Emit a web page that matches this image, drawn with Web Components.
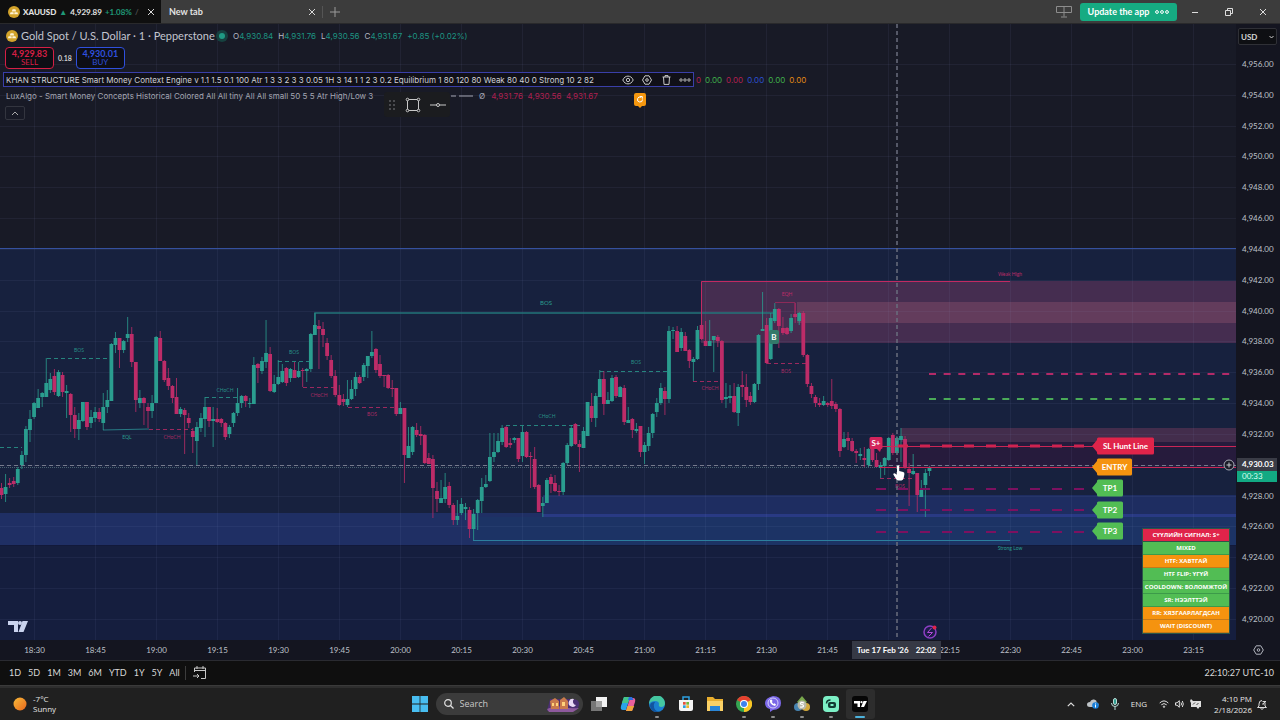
<!DOCTYPE html>
<html lang="en">
<head>
<meta charset="utf-8">
<title>XAUUSD</title>
<meta name="viewport" content="width=device-width, initial-scale=1">
<style>
  html, body { margin: 0; height: 100%; background: #131420; }
  body { font-family: Lato, "Open Sans", sans-serif; color: #c9cbd2; }
</style>
</head>
<body>
<trade-app>
  <tab-bar slot="tabs">
    <app-tab active>
      <gold-logo slot="icon"></gold-logo>
      <b>XAUUSD</b> <i class="up">▲</i> <span>4,929.89</span> <i class="up">+1.08%</i> <i class="dim">/</i>
    </app-tab>
    <app-tab><span>New tab</span></app-tab>
  </tab-bar>
  <price-chart slot="chart">
    <chart-legend slot="legend"></chart-legend>
    <signal-table slot="signals"></signal-table>
  </price-chart>
  <price-axis slot="price"></price-axis>
  <time-axis slot="time"></time-axis>
  <range-bar slot="range"></range-bar>
  <task-bar slot="tasks"></task-bar>
</trade-app>

<script>
// shared helper: opens the shadow root and fills it with styles and markup
class BaseElement extends HTMLElement {
  connectedCallback() {
    if (this.shadowRoot) return;
    this.attachShadow({ mode: 'open' });
    const template = document.createElement('template');
    template.innerHTML = `<style>
      :host, * { box-sizing: border-box; }
      button, select, input { font: inherit; color: inherit; background: none; border: 0; padding: 0; margin: 0; }
      button { display: inline-flex; align-items: center; justify-content: center; }
      svg { display: block; flex: none; }
      ul { list-style: none; margin: 0; padding: 0; }
      ${this.constructor.styles}
    </style>${this.render()}`;
    this.shadowRoot.replaceChildren(template.content);
  }
}

class TradeApp extends BaseElement {
  static styles = /* css */`
    :host {
      display: grid;
      min-height: 100vh;
      grid-template-columns: minmax(0, 1fr) 44px;
      grid-template-rows: 24px minmax(0, 1fr) 20px 26px 34px;
    }
    .wide { grid-column: 1 / -1; display: grid; }
    .cell { display: grid; min-height: 0; }
  `;

  render() {
    return /* html */`
      <header class="wide"><slot name="tabs"></slot></header>
      <main class="cell"><slot name="chart"></slot></main>
      <aside class="cell"><slot name="price"></slot></aside>
      <div class="wide"><slot name="time"></slot></div>
      <nav class="wide"><slot name="range"></slot></nav>
      <footer class="wide"><slot name="tasks"></slot></footer>
    `;
  }
}

class GoldLogo extends BaseElement {
  static styles = `:host { display: inline-block; width: 12px; height: 12px; flex: none; }`;

  render() {
    return `<svg width="12" height="12" viewBox="0 0 12 12"><circle cx="6" cy="6" r="6" fill="#d3a32b"/>
      <path d="M4.6 3.2h2.8l.8 2.2H3.8zM2.6 6.2h2.9l.3 2H1.9zM6.5 6.2h2.9l.7 2H6.2z" fill="#fff3d6"/></svg>`;
  }
}

class TabBar extends BaseElement {
  static styles = /* css */`
    :host { display: flex; align-items: stretch; background: #3c3c3c; border-bottom: 1px solid #29292b; font-size: 9px; }
    .plus { width: 24px; border-left: 1px solid #555; height: 12px; align-self: center; }
    .space { flex: 1; background: #3c3c3c; }
    .tools { display: flex; align-items: center; }
    .update {
      width: 97px; height: 18px; margin: 0 1px 0 8px; gap: 6px; border-radius: 3px;
      background: #16ab82; color: #fff; font-weight: 700; font-size: 9px;
    }
    .win { width: 34px; height: 22px; color: #ddd; }
  `;

  render() {
    return /* html */`
      <slot></slot>
      <button class="plus" aria-label="Open tab"><svg width="10" height="10" viewBox="0 0 10 10" stroke="#9a9a9a"><path d="M5 0v10M0 5h10"/></svg></button>
      <div class="space"></div>
      <div class="tools">
        <button aria-label="Displays"><svg width="16" height="12" viewBox="0 0 16 12" fill="none" stroke="#8d8d8d"><path d="M.5.5h15v6H.5zM8 .5v10M5 11h6"/></svg></button>
        <button class="update">Update the app
          <svg width="14" height="4" viewBox="0 0 14 4" fill="none" stroke="#fff"><circle cx="2" cy="2" r="1.4"/><circle cx="7" cy="2" r="1.4"/><circle cx="12" cy="2" r="1.4"/></svg></button>
        <button class="win" aria-label="Minimize"><svg width="8" height="8" viewBox="0 0 8 8" stroke="currentColor"><path d="M1 4.5h6"/></svg></button>
        <button class="win" aria-label="Restore"><svg width="8" height="8" viewBox="0 0 8 8" fill="none" stroke="currentColor"><path d="M.5 2.5h5v5h-5zM2.5 2V.5h5v5H6"/></svg></button>
        <button class="win" aria-label="Close"><svg width="8" height="8" viewBox="0 0 8 8" stroke="currentColor"><path d="M1 1l6 6M7 1L1 7"/></svg></button>
      </div>
    `;
  }
}

class AppTab extends BaseElement {
  static styles = /* css */`
    :host {
      display: flex; align-items: center; gap: 3px; width: 161px; padding: 0 4px 0 8px;
      color: #e3e3e3; font-weight: 700; font-size: 9px; line-height: 12px; white-space: nowrap;
    }
    :host([active]) { background: #0f0f0f; font-size: 8px; }
    ::slotted(*) { font-style: normal; }
    ::slotted(.up) { color: #1f9a78; }
    ::slotted(.dim) { color: #4b4b4b; }
    button { margin-left: auto; width: 12px; height: 12px; }
  `;

  render() {
    return /* html */`
      <slot name="icon"></slot><slot></slot>
      <button aria-label="Close tab"><svg width="6" height="6" viewBox="0 0 6 6" stroke="#d8d8d8"><path d="M0 0l6 6M6 0L0 6"/></svg></button>
    `;
  }
}

class ChartLegend extends BaseElement {
  static styles = /* css */`
    :host { display: flex; flex-direction: column; align-items: flex-start; font: 8px/12px Inter, sans-serif; white-space: nowrap; color: #b7b9c4; }
    .row { display: flex; align-items: center; }
    .title { height: 14px; padding-left: 6px; gap: 3px; margin-top: 5px; }
    h1 { margin: 0; font: 400 11px/14px Lato, sans-serif; color: #c3c5cf; width: 190px; }
    .dot { width: 6px; height: 6px; border-radius: 50%; background: #1f9a84; box-shadow: 0 0 0 3px #16413f; margin: 0 5px; }
    .ohlc { display: flex; gap: 5px; color: #1d9482; }
    .ohlc b { font-weight: 400; color: #b7b9c4; }
    .quote { gap: 4px; padding-left: 5px; margin-top: 4px; height: 22px; font-family: Lato, sans-serif; }
    .quote button {
      flex-direction: column; width: 49px; height: 22px; border: 1px solid; border-radius: 4px;
      background: #0d0e15; font-size: 8px; line-height: 9px;
    }
    .quote strong { font-size: 9px; }
    .sell { color: #d51f45; }
    .buy { color: #2f50dd; }
    .spread { font-size: 7px; font-weight: 700; color: #ccc; }
    .study { margin: 3px 0 0 3px; gap: 2px; height: 15px; }
    .box { display: flex; align-items: center; height: 15px; border: 1px solid #3a3fa8; background: #101018; padding: 0 2px; color: #d0d1d6; }
    .box p { width: 616px; }
    .icons { display: flex; gap: 7px; }
    .icons button { width: 12px; height: 12px; }
    p { margin: 0; }
    .values { display: flex; gap: 4px; }
    .red { color: #b02050; }
    .lux { padding-left: 6px; margin-top: 3px; height: 12px; gap: 6px; color: #a4a6b2; }
    .lux p { width: 439px; }
    .toggle { width: 20px; height: 14px; border: 1px solid #33353f; border-radius: 2px; margin: 4px 0 0 5px; }
    /* the drawing tools float above the legend */
    .tools {
      position: absolute; left: 384px; top: 68px; width: 66px; height: 25px; border-radius: 3px;
      background: #1b1c1f; display: flex; align-items: center; justify-content: space-between; padding: 0 4px 0 5px;
    }
  `;

  render() {
    const values = [['#b02050', '0'], ['#3fae4a', '0.00'], ['#b02050', '0.00'], ['#2b4fd0', '0.00'], ['#3fae4a', '0.00'], ['#e08a14', '0.00']];
    return /* html */`
      <div class="row title">
        <gold-logo></gold-logo>
        <h1>Gold Spot / U.S. Dollar · 1 · Pepperstone</h1>
        <i class="dot"></i>
        <div class="ohlc">
          <span><b>O</b>4,930.84</span><span><b>H</b>4,931.76</span><span><b>L</b>4,930.56</span><span><b>C</b>4,931.67</span><span>+0.85 (+0.02%)</span>
        </div>
      </div>
      <div class="row quote">
        <button class="sell"><strong>4,929.83</strong>SELL</button>
        <span class="spread">0.18</span>
        <button class="buy"><strong>4,930.01</strong>BUY</button>
      </div>
      <div class="row study">
        <div class="box">
          <p>KHAN STRUCTURE Smart Money Context Engine v 1.1 1.5 0.1 100 Atr 1 3 3 2 3 3 0.05 1H 3 14 1 1 2 3 0.2 Equilibrium 1 80 120 80 Weak 80 40 0 Strong 10 2 82</p>
          <div class="icons">
            <button aria-label="Hide"><svg width="12" height="10" viewBox="0 0 12 10" fill="none" stroke="#c8c8c8"><path d="M.8 5C3-.2 9-.2 11.2 5 9 10.2 3 10.2.8 5z"/><circle cx="6" cy="5" r="1.7"/></svg></button>
            <button aria-label="Settings"><svg width="10" height="10" viewBox="0 0 10 10" fill="none" stroke="#c8c8c8"><path d="M3 .8h4L9.5 5 7 9.2H3L.5 5z"/><circle cx="5" cy="5" r="1.3"/></svg></button>
            <button aria-label="Remove"><svg width="9" height="10" viewBox="0 0 9 10" fill="none" stroke="#c8c8c8"><path d="M.5 2h8M3 2V.6h3V2M1.5 2l.5 7.4h5L7.5 2"/></svg></button>
            <button aria-label="More"><svg width="12" height="4" viewBox="0 0 12 4" fill="none" stroke="#b8b8b8"><circle cx="2" cy="2" r="1.2"/><circle cx="6" cy="2" r="1.2"/><circle cx="10" cy="2" r="1.2"/></svg></button>
          </div>
        </div>
        <div class="values">${values.map(([color, text]) => `<span style="color:${color}">${text}</span>`).join('')}</div>
      </div>
      <div class="row lux">
        <p>LuxAlgo - Smart Money Concepts Historical Colored All All tiny All All small 50 5 5 Atr High/Low 3</p>
        <svg width="22" height="2" viewBox="0 0 22 2" stroke="#a4a6b2"><path d="M0 1h5M8 1h14"/></svg>
        <span>Ø</span><span class="red">4,931.76&nbsp; 4,930.56&nbsp; 4,931.67</span>
      </div>
      <button class="toggle" aria-label="Collapse legend"><svg width="8" height="5" viewBox="0 0 8 5" fill="none" stroke="#aaa"><path d="M1 4l3-3 3 3"/></svg></button>
      <div class="tools">
        <svg width="6" height="10" viewBox="0 0 6 10" fill="#4a4b4f"><path d="M0 0h2v2H0zM4 0h2v2H4zM0 4h2v2H0zM4 4h2v2H4zM0 8h2v2H0zM4 8h2v2H4z"/></svg>
        <button aria-label="Rectangle"><svg width="16" height="16" viewBox="0 0 16 16" fill="#1b1c1f" stroke="#c8c8c8"><path d="M2.5 2.5h11v11h-11z"/><circle cx="2.5" cy="2.5" r="1.3"/><circle cx="13.5" cy="2.5" r="1.3"/><circle cx="2.5" cy="13.5" r="1.3"/><circle cx="13.5" cy="13.5" r="1.3"/></svg></button>
        <button aria-label="Line"><svg width="16" height="6" viewBox="0 0 16 6" fill="#1b1c1f" stroke="#c8c8c8"><path d="M0 3h16"/><circle cx="8" cy="3" r="1.5"/></svg></button>
      </div>
    `;
  }
}

// one bar per minute: direction, high, body top, body bottom, low
const BARS = `
r483,488,495,499 g474,487,494,502 r478,483,485,488 r477,481,484,487 g467,469,483,485 g451,455,465,469 g426,429,455,462
g410,419,430,442 g402,403,417,419 g389,398,408,408 g392,393,397,407 g358,383,397,397 g373,379,390,393 r369,376,392,395
g370,372,396,397 r372,375,392,397 g385,391,393,418 r393,394,415,432 r407,415,429,438 g413,420,429,440 g402,402,421,422
r402,402,427,430 g410,417,423,428 g407,412,418,422 r408,412,419,422 g393,407,423,430 g390,400,407,413 g343,344,401,401
g332,338,345,353 r338,338,350,368 g340,341,350,353 g317,334,338,342 r327,334,362,367 r362,362,400,412 g390,398,403,408
r397,398,403,425 r403,407,411,428 g395,403,411,418 g336,337,403,403 r331,338,361,361 r360,361,380,382 r368,378,386,390
r385,386,398,403 r378,397,414,414 g407,409,414,417 r408,410,415,454 r413,418,423,428 r428,431,437,453 g422,427,441,465
g413,418,428,432 g397,407,419,437 r407,407,421,427 g407,419,421,447 r408,419,422,423 r418,419,423,427 r422,423,437,440
g425,427,434,438 g412,413,423,427 g388,403,413,416 g395,396,403,408 r395,396,401,407 g398,403,404,408 g357,365,404,404
r363,364,368,383 g357,361,371,374 g320,353,362,368 r347,354,391,392 g375,384,392,393 g360,377,384,385 g364,371,382,383
r367,368,383,386 g368,369,378,382 r362,370,378,378 g362,371,377,378 r368,370,371,387 g368,369,371,382 g333,334,369,372
g313,325,335,335 r320,326,329,369 r322,329,335,347 r338,343,356,360 r355,360,376,378 r370,376,395,397 r385,395,405,406
r394,399,402,406 g380,399,405,407 g380,389,399,400 g372,377,389,396 r375,377,383,384 g363,365,377,381 g356,356,366,378
g331,352,356,358 r348,349,370,373 r355,364,376,378 r375,375,376,387 r374,375,388,389 r380,388,389,397 r388,388,414,416
g402,408,414,414 r408,408,455,483 g427,446,458,458 g426,427,452,455 r423,430,435,437 r426,434,436,445 r434,435,463,464
r453,458,464,464 r455,459,488,518 r482,491,499,512 g480,498,503,503 g473,487,499,503 r482,486,505,508 r503,505,520,525
g500,516,520,525 g498,504,513,515 g503,507,509,520 r507,510,529,538 g509,514,529,540 g499,500,513,530 g478,487,501,513
g475,484,487,488 g433,457,481,482 g433,452,457,462 g433,441,452,453 g425,428,442,445 r426,427,447,448 r438,443,445,448
g437,438,440,443 r438,438,459,462 g426,432,456,462 r431,432,457,458 r452,456,457,488 r447,459,487,489 r484,485,512,512
g497,503,506,517 g478,480,503,503 r474,477,484,493 r475,483,491,492 r485,491,492,496 g462,463,492,495 g443,445,463,465
g425,428,446,447 r423,424,444,445 r440,444,447,472 g427,431,448,448 g402,402,436,436 r393,406,418,422 g393,396,418,427
g370,379,397,397 r371,379,404,415 g392,400,404,404 g375,378,401,402 r375,377,396,398 g386,387,397,397 r385,388,422,425
g407,420,423,423 r418,419,430,438 g423,429,431,433 r426,426,452,457 g442,445,452,464 g427,433,446,451 g413,414,433,438
g398,403,412,417 g383,388,403,405 r387,391,399,415 g326,331,399,403 g327,330,331,339 r326,331,352,352 g328,332,348,351
r332,336,351,351 r349,350,361,368 g357,359,362,381 g326,330,359,360 r321,325,339,340 r321,341,346,346 g320,341,346,346
g336,336,340,372 r335,337,341,347 r340,341,400,403 g383,397,399,408 g385,396,398,403 r383,396,412,413 g384,387,413,426
r371,385,387,397 r374,387,400,407 r392,396,402,405 g383,384,402,403 g334,335,384,390 g292,329,331,331 r318,325,363,364
g313,318,359,360 g303,309,321,323 r308,309,326,348 r317,328,333,335 r327,328,334,335 g314,318,331,333 r303,314,317,323
g312,313,321,325 r311,313,355,357 r354,355,384,387 r383,386,394,398 r395,397,403,407 r398,403,405,407 g396,401,405,406
r402,403,405,407 r379,401,406,409 r402,404,409,412 r408,409,451,457 g432,439,447,448 r432,438,441,450 r438,441,451,452
r449,451,453,463 g448,454,456,460 r447,458,460,467 g448,449,465,467 r437,448,460,462 r453,460,467,467 g462,465,468,478
g457,458,466,475 g437,438,460,461 r433,435,453,455 g436,438,453,453 g428,436,440,462 r436,439,468,469 r463,469,473,506
g454,471,474,475 r473,473,495,512 g480,490,497,497 g469,473,485,517 g466,467,471,476`.trim().split(/\s+/);

const TEAL = '#2a9d8f';
const PINK = '#bd2c68';

class PriceChart extends BaseElement {
  static styles = /* css */`
    :host { display: grid; position: relative; overflow: hidden; min-height: 0; }
    .plot { width: 100%; height: 100%; min-height: 0; }
    text { font-family: Lato, "Open Sans", sans-serif; text-anchor: middle; }
    .legend { position: absolute; left: 0; top: 0; }
    .signals { position: absolute; right: 6px; bottom: 6px; }
  `;

  grid() {
    let d = '';
    for (let i = 0; i < 20; i++) d += `M${34.5 + 61 * i} 24V640`;
    for (let i = 0; i < 19; i++) d += `M0 ${Math.round(64 + 30.83 * i) + .5}H1236`;
    return `<path d="${d}" stroke="#8f9ac8" stroke-opacity=".08"/>`;
  }

  bars() {
    return BARS.map((bar, i) => {
      const [high, top, bottom, low] = bar.slice(1).split(',').map(Number);
      const color = bar[0] === 'g' ? TEAL : PINK;
      const x = 1.5 + 4.07 * i;
      return `<path d="M${x} ${high}V${low}" stroke="${color}" stroke-opacity=".8"/>
        <rect x="${x - 1.9}" y="${top}" width="3.8" height="${Math.max(bottom - top, 1)}" fill="${color}"/>`;
    }).join('');
  }

  structures() {
    // x1, x2, y, label, label x, label y, colour
    const lines = [
      [0, 22, 447, '', 0, 0, TEAL], [47, 111, 358, 'BOS', 79, 352, TEAL], [149, 193, 429, 'CHoCH', 172, 439, PINK],
      [205, 238, 397, 'CHoCH', 225, 392, TEAL], [278, 311, 361, 'BOS', 294, 354, TEAL], [303, 335, 387, 'CHoCH', 319, 397, PINK],
      [348, 396, 407, 'BOS', 372, 416, PINK], [506, 583, 425, 'CHoCH', 547, 418, TEAL], [600, 669, 371, 'BOS', 636, 364, TEAL],
      [693, 722, 381, 'CHoCH', 710, 390, PINK], [767, 806, 363, 'BOS', 786, 373, PINK], [880, 915, 478, 'BOS', 900, 488, PINK]
    ];
    return lines.map(([x1, x2, y, label, lx, ly, color]) => `
      <path d="M${x1} ${y + .5}H${x2}" stroke="${color}" stroke-opacity=".8" stroke-dasharray="4 3"/>
      <text x="${lx}" y="${ly}" font-size="5" fill="${color}" fill-opacity=".9">${label}</text>`).join('');
  }

  tags() {
    const tags = [[446, 'SL Hunt Line', 57, '#e0244a'], [467, 'ENTRY', 35, '#f5930f'], [488, 'TP1', 26, '#52bd54'], [510, 'TP2', 26, '#52bd54'], [531, 'TP3', 26, '#52bd54']];
    return tags.map(([y, label, width, fill]) => `
      <path d="M1092 ${y}l5-6v-1q0-1.5 1.5-1.5h${width - 3}q1.5 0 1.5 1.5v14q0 1.5-1.5 1.5h-${width - 3}q-1.5 0-1.5-1.5v-1z" fill="${fill}"/>
      <text x="${1097 + width / 2}" y="${y + 3}" font-size="8" font-weight="700" fill="#fff">${label}</text>`).join('');
  }

  render() {
    return /* html */`
      <svg class="plot" viewBox="0 24 1236 616" preserveAspectRatio="xMaxYMid slice" role="img" aria-label="XAUUSD one minute chart">
        <path d="M0 24h1236v616H0z" fill="#181a26"/>
        <path d="M0 249h1236v391H0z" fill="#17213e"/>
        <path d="M0 546h1236v94H0z" fill="#151e3e"/>
        <path d="M0 513h1236v32H0z" fill="#1f2f64"/>
        <path d="M543 495h693v19H543z" fill="#1e2d61"/>
        <path d="M473 517h763v28H473z" fill="#1c3365"/>
        <path d="M543 514h693v3H543z" fill="#293a84"/>
        <path d="M0 545.5h1236" stroke="#12193a"/>
        <path d="M701 281h535v62H701z" fill="#452d50"/>
        <path d="M797 302h439v21H797z" fill="#633c5c"/>
        <path d="M901 428h335v14H901z" fill="#432d4c"/>
        <path d="M877 442h359v25H877z" fill="#261b3c"/>
        ${this.grid()}
        <path d="M0 248.5h1236" stroke="#35519f"/>
        <path d="M315 335V313H776" fill="none" stroke="#23747a" stroke-width="1.5"/>
        <path d="M701.5 335V281.5H1010" fill="none" stroke="#c22a62"/>
        <path d="M473 540.5H1010" stroke="#2c7f9e"/>
        <path d="M103 430l46-1" stroke="#287a84"/>
        <path d="M775 302.5h20v12" fill="none" stroke="#8c2a58"/>
        <path d="M0 465.5h1236" stroke="#767a8c" stroke-dasharray="4 3"/>
        <path d="M0 467.5h877" stroke="#48606f" stroke-dasharray="1 1"/>
        ${this.structures()}
        ${this.bars()}
        <text x="546" y="305" font-size="6" fill="${TEAL}">BOS</text>
        <text x="127" y="439" font-size="5" fill="${TEAL}">EQL</text>
        <text x="787" y="296" font-size="5" fill="${PINK}">EQH</text>
        <text x="1010" y="276" font-size="5" fill="${PINK}">Weak High</text>
        <text x="1010" y="550" font-size="5" fill="${TEAL}">Strong Low</text>
        <path d="M929 374h307" stroke="#b32a68" stroke-width="2" stroke-dasharray="7 7.66"/>
        <path d="M929 399h307" stroke="#4aaa58" stroke-width="2" stroke-dasharray="7 7.66"/>
        <path d="M882 446.5H1236" stroke="#c92655"/>
        <path d="M880 467.5H1236" stroke="#c92655"/>
        <path d="M898 446h190" stroke="#cf2350" stroke-width="3" stroke-dasharray="10 12"/>
        <path d="M876 489h212M876 510h212M876 532h212" stroke="#7c1160" stroke-width="2" stroke-dasharray="10 12"/>
        <path d="M897 24V640" stroke="#696d7e" stroke-width="1.5" stroke-dasharray="4 3"/>
        <rect x="769" y="330" width="10" height="14" rx="2" fill="#33796a"/>
        <text x="774" y="340" font-size="8" font-weight="700" fill="#fff">B</text>
        <path d="M871 437h10q1.5 0 1.5 1.5v9q0 1.5-1.5 1.5l-1 3-3-3h-6q-1.5 0-1.5-1.5v-9q0-1.5 1.5-1.5z" fill="#d3245b"/>
        <text x="876" y="446" font-size="8" font-weight="700" fill="#fff">S+</text>
        ${this.tags()}
        <path d="M636 93h8q2 0 2 2v9q0 2-2 2h-2l-2 2-2-2h-2q-2 0-2-2v-9q0-2 2-2z" fill="#f5970f"/>
        <path d="M642.5 99.500a2.500 2.500 0 1 1-1.300-2.200M640 96.500h2.300v2.200" fill="none" stroke="#fff"/>
        <g fill="#c9d3ee"><path d="M8 621h10v11h-4v-7H8zM22.500 621H28l-4.500 11h-5z"/><circle cx="20" cy="623" r="2"/></g>
        <circle cx="930" cy="632" r="6" fill="#1c1c48" stroke="#8d3fc4" stroke-width="1.5"/>
        <path d="M931.500 628l-4 4.500h5l-4 4" fill="none" stroke="#b34ad8"/>
        <circle cx="934.500" cy="627.500" r="2" fill="#e0244a"/>
        <circle cx="1229" cy="465" r="5" fill="#1a1a26" stroke="#aaadb8"/>
        <path d="M1226.500 465h5M1229 462.500v5" stroke="#c8cad0"/>
        <path d="M897 466q1.200-1.300 2.200 0v5l4 1q1.500.6 1.200 2.200l-.8 4q-.4 2-2.200 2.300h-3q-1.500-.3-2.300-1.600l-2.800-4.300q0-1.600 1.700-1.200l2 1.300z" fill="#fff"/>
      </svg>
      <div class="legend"><slot name="legend"></slot></div>
      <div class="signals"><slot name="signals"></slot></div>
    `;
  }
}

class SignalTable extends BaseElement {
  static styles = /* css */`
    :host { display: block; }
    table { width: 88px; border-spacing: 0; border: 1px solid #2c5648; }
    td { height: 13px; padding: 0; border-bottom: 1px solid #2c5648; color: #fff; font: 700 6px/12px "Open Sans", sans-serif; text-align: center; white-space: nowrap; }
    .red { background: #e0244a; }
    .green { background: #52bd54; border-color: #3c9a4a; }
    .orange { background: #f5930f; border-color: #c57a1a; }
  `;

  render() {
    const rows = [
      ['red', 'СҮҮЛИЙН СИГНАЛ: S+'], ['green', 'MIXED'], ['orange', 'HTF: ХАВТГАЙ'], ['green', 'HTF FLIP: ҮГҮЙ'],
      ['green', 'COOLDOWN: БОЛОМЖТОЙ'], ['green', 'SR: НЭЭЛТТЭЙ'], ['orange', 'RR: ХЯЗГААРЛАГДСАН'], ['orange', 'WAIT (DISCOUNT)']
    ];
    return `<table>${rows.map(([tone, text]) => `<tr><td class="${tone}">${text}</td></tr>`).join('')}</table>`;
  }
}

class PriceAxis extends BaseElement {
  static styles = /* css */`
    :host { display: flex; flex-direction: column; background: #141520; font-size: 8px; line-height: 12px; color: #bfc2ca; }
    select { margin: 4px 3px 0 2px; height: 17px; padding: 0 2px; border: 1px solid #2f3036; border-radius: 2px; background: #0e0f13; color: #d5d5d5; font-weight: 700; appearance: none; }
    .pick { display: grid; position: relative; }
    .pick svg { position: absolute; right: 6px; top: 11px; }
    ul { flex: 1; display: flex; flex-direction: column; justify-content: space-between; padding: 13px 0 15px 6px; }
    li { height: 12px; }
    .now { position: relative; }
    /* the live price covers the axis */
    .badge { position: absolute; left: -5px; top: -1px; width: 40px; }
    .badge span { display: block; padding-left: 5px; }
    .last { height: 13px; line-height: 13px; background: #3a3c46; color: #fff; font-weight: 700; }
    .left { height: 11px; line-height: 11px; background: #12a983; color: #d8fff2; }
  `;

  render() {
    const items = [];
    for (let price = 4956; price >= 4920; price -= 2) {
      items.push(price === 4930
        ? '<li class="now"><div class="badge"><span class="last">4,930.03</span><span class="left">00:33</span></div></li>'
        : `<li>${price.toLocaleString('en-US')}.00</li>`);
    }
    return /* html */`
      <div class="pick">
        <select aria-label="Currency"><option>USD</option></select>
        <svg width="5" height="4" viewBox="0 0 5 4" fill="none" stroke="#ccc"><path d="M.5 1l2 2 2-2"/></svg>
      </div>
      <ul>${items.join('')}</ul>`;
  }
}

class TimeAxis extends BaseElement {
  static styles = /* css */`
    :host { display: flex; position: relative; background: #141520; border-bottom: 1px solid #2a2b31; font-size: 8px; line-height: 20px; color: #bfc2ca; }
    ul { flex: 1; display: grid; grid-template-columns: repeat(20, minmax(0, 1fr)); padding: 0 12px 0 4px; text-align: center; }
    .cursor { position: absolute; left: 852px; top: 1px; width: 89px; height: 18px; line-height: 18px; display: flex; justify-content: center; gap: 7px; background: #363945; color: #fff; font-weight: 700; }
    button { width: 44px; }
  `;

  render() {
    const items = [];
    for (let i = 0; i < 20; i++) {
      const minutes = 18 * 60 + 30 + i * 15;
      const label = `${Math.floor(minutes / 60)}:${String(minutes % 60).padStart(2, '0')}`;
      items.push(`<li>${label === '22:00' ? '' : label}</li>`);
    }
    return /* html */`
      <ul>${items.join('')}</ul>
      <div class="cursor"><span>Tue 17 Feb '26</span><span>22:02</span></div>
      <button aria-label="Axis settings"><svg width="11" height="10" viewBox="0 0 11 10" fill="none" stroke="#b2b5be"><path d="M3.2.8h4.6L10.3 5 7.8 9.2H3.2L.7 5z"/><circle cx="5.5" cy="5" r="1.3"/></svg></button>
    `;
  }
}

class RangeBar extends BaseElement {
  static styles = /* css */`
    :host { display: flex; align-items: center; background: #0f0f0f; padding: 0 6px 0 9px; border-bottom: 1px solid #3a3a3a; font-size: 9px; color: #d8d8d8; }
    .ranges { display: flex; gap: 7px; padding-right: 5px; margin-right: 7px; border-right: 1px solid #3c3c3c; height: 14px; }
    .clock { margin-left: auto; }
  `;

  render() {
    return /* html */`
      <div class="ranges">${['1D', '5D', '1M', '3M', '6M', 'YTD', '1Y', '5Y', 'All'].map(r => `<button>${r}</button>`).join('')}</div>
      <button aria-label="Go to date"><svg width="13" height="13" viewBox="0 0 13 13" fill="none" stroke="#c8c8c8"><path d="M1.5 6V2h11v10.5H8M1.5 4.5h11M4 0v3M10 0v3M0 10h6M4 8l2 2-2 2"/></svg></button>
      <button class="clock">22:10:27 UTC-10</button>
    `;
  }
}

class TaskBar extends BaseElement {
  static styles = /* css */`
    :host {
      display: grid; grid-template-columns: 1fr auto 1fr; align-items: center; background: #202020;
      border-top: 2px solid #2e2e2e; font: 9px/12px "Open Sans", sans-serif; color: #e6e6e6;
    }
    .weather { display: flex; align-items: center; gap: 6px; padding-left: 13px; justify-self: start; text-align: left; }
    .weather span { display: block; line-height: 10px; font-size: 8px; }
    .apps { display: flex; align-items: center; padding-left: 6px; }
    .search { display: flex; align-items: center; width: 147px; height: 22px; border-radius: 11px; background: #3b3b3b; margin: 0 2px 0 8px; padding: 0 3px 0 8px; gap: 6px; }
    .search input { flex: 1; min-width: 0; font-size: 9px; outline: 0; }
    .search input::placeholder { color: #c8c8c8; opacity: 1; }
    .app { position: relative; width: 29px; height: 30px; }
    .app.open::after { content: ""; position: absolute; bottom: 1px; width: 4px; height: 2px; border-radius: 1px; background: #8d8d8d; }
    .app.current { background: #2d2d2d; border-radius: 3px; }
    .app.current::after { width: 10px; background: #4cb2dc; }
    .tray { display: flex; align-items: center; justify-self: end; gap: 12px; padding-right: 13px; font-size: 8px; }
    .group { display: flex; gap: 6px; align-items: center; }
    .time { text-align: right; line-height: 11px; font-size: 8px; }
    .end { display: flex; align-items: center; gap: 5px; }
  `;

  render() {
    const apps = [
      ['Task view', '', '<path d="M5 1h11v10H5z" fill="#f2f2f2"/><path d="M0 5h11v10H0z" fill="#8c8c8c" fill-opacity=".8"/>'],
      ['Copilot', '', '<path d="M4 1h6l-4 13H3Q0 14 1 10z" fill="#2aa4e8"/><path d="M4 1h6L8 7H1.8z" fill="#43c48a"/><path d="M12 15H6L10 2h3q3 0 2 4z" fill="#e9609c"/><path d="M12 15H6l1.5-5h6.7z" fill="#f0a33d"/><path d="M9 1h3l1.5 3H8z" fill="#2a6de0"/>'],
      ['Edge', 'open', '<circle cx="8" cy="8" r="8" fill="#1a7fd0"/><path d="M0 8A8 8 0 0 1 16 7q0 4-4 4-3 0-2-3 0-3-4-3Q2 5 0 8z" fill="#45c7a0"/><path d="M5 8q-1 6 5 8Q2 17 1 10q0-4 5-4z" fill="#12549f"/>'],
      ['Store', '', '<path d="M1 4h14v9q0 2-2 2H3q-2 0-2-2z" fill="#f4f4f4"/><path d="M5 4V1h6v3" fill="none" stroke="#2b9fe0" stroke-width="1.5"/><path d="M5 6h2.700v2.700H5z" fill="#e5533c"/><path d="M8.300 6H11v2.700H8.300z" fill="#6fb83d"/><path d="M5 9.300h2.700V12H5z" fill="#2b9fe0"/><path d="M8.300 9.300H11V12H8.300z" fill="#f0b52c"/>'],
      ['Files', '', '<path d="M0 1h6l2 2h8v12H0z" fill="#e9ae2e"/><path d="M0 5h16v10H0z" fill="#fad166"/><path d="M3 10h10v5H3z" fill="#2b86d6"/>'],
      ['Chrome', 'open', '<circle cx="8" cy="8" r="8" fill="#35a552"/><path d="M8 8L1 4a8 8 0 0 1 14 0z" fill="#e5412f"/><path d="M8 8l7-4a8 8 0 0 1-7 12z" fill="#fbc524"/><circle cx="8" cy="8" r="4" fill="#fff"/><circle cx="8" cy="8" r="3" fill="#3f82ee"/>'],
      ['Viber', 'open', '<path d="M8 0q8 0 8 7t-8 7l-3 2v-3Q0 12 0 7t8-7z" fill="#7b68e8"/><circle cx="8" cy="7" r="5" fill="none" stroke="#d5cffa"/><path d="M5 4q-1 4 5 6l1-1.5-1.5-1.2-1 .7-1.7-2 .8-1L6.5 3.6z" fill="#fff"/>'],
      ['Terminal', 'open', '<path d="M8 0l5 6-5 4-5-4z" fill="#79a94d"/><circle cx="4" cy="11" r="4" fill="#4784b0"/><circle cx="12" cy="11" r="4" fill="#d3a93b"/><circle cx="8" cy="9" r="4.5" fill="#b9b9a8"/><path d="M10 7Q6 5.5 6.5 8q3 .6 3 2T6 11" fill="none" stroke="#fff" stroke-width="1.2"/>'],
      ['Recorder', 'open', '<rect width="16" height="16" rx="4" fill="#7df0c6"/><rect x="5" y="6" width="8" height="6" rx="2" fill="#123b34"/><rect x="7.5" y="8" width="3" height="2" fill="#7df0c6"/><path d="M3.5 7.5q0-3.5 4-3.5" fill="none" stroke="#123b34" stroke-width="1.5"/>'],
      ['TradingView', 'open current', '<rect width="16" height="16" rx="3" fill="#060606"/><path d="M2 5h6v6H5.5V7.5H2zM11.5 5H15l-3 6H9z" fill="#fff"/><circle cx="9.5" cy="6.2" r="1.1" fill="#fff"/>']
    ];
    return /* html */`
      <button class="weather">
        <svg width="14" height="14" viewBox="0 0 14 14"><defs><linearGradient id="sun" x2="1" y2="1"><stop stop-color="#f8bb3a"/><stop offset="1" stop-color="#e8661c"/></linearGradient></defs><circle cx="7" cy="7" r="6.5" fill="url(#sun)"/></svg>
        <span><span>-7°C</span><span>Sunny</span></span>
      </button>
      <div class="apps">
        <button aria-label="Start"><svg width="16" height="16" viewBox="0 0 16 16" fill="#48bdf0"><path d="M0 0h7.6v7.6H0zM8.4 0H16v7.6H8.4zM0 8.4h7.6V16H0zM8.4 8.4H16V16H8.4z"/></svg></button>
        <label class="search">
          <svg width="10" height="10" viewBox="0 0 10 10" fill="none" stroke="#e0e0e0" stroke-width="1.2"><circle cx="4" cy="4" r="3.3"/><path d="M6.5 6.5l3 3"/></svg>
          <input type="text" placeholder="Search" aria-label="Search">
          <svg width="33" height="16" viewBox="0 0 33 16"><path d="M3 3h22q8 0 7 6-1 6-8 6H0z" fill="#4b2f73"/><path d="M0 13q8-4 16-2t16 1l-6 4H2z" fill="#8e5a9d"/><path d="M3 5l5-3 4 3v8H4zM13 4l4-3 4 4v8h-8z" fill="#c97a4c"/><path d="M5 7h2v3H5zM9 7h2v3H9zM15 6h3v4h-3z" fill="#ffd27a"/><path d="M27 3a4 4 0 1 0 2 6 3.5 3.5 0 0 1-2-6z" fill="#e9d9f5"/></svg>
        </label>
        ${apps.map(([name, state, art]) => `<button class="app ${state}" aria-label="${name}"><svg width="16" height="16" viewBox="0 0 16 16">${art}</svg></button>`).join('')}
      </div>
      <div class="tray">
        <button aria-label="Hidden icons"><svg width="8" height="5" viewBox="0 0 8 5" fill="none" stroke="#ddd" stroke-width="1.2"><path d="M.8 4.2L4 1l3.200 3.200"/></svg></button>
        <button aria-label="OneDrive"><svg width="12" height="10" viewBox="0 0 12 10"><path d="M3 8Q0 8 0 5.500T3 3q1-3 4-2.500T9.500 3.500Q12 4 11.500 6T9 8z" fill="#bfc4c8"/><circle cx="8.5" cy="6.5" r="3.3" fill="#1a7fd8"/><path d="M8.5 4.5v1M8.5 6v2.5" stroke="#fff"/></svg></button>
        <button aria-label="Microphone"><svg width="8" height="12" viewBox="0 0 8 12" fill="none" stroke="#b9dcd6"><rect x="2.5" y=".5" width="3" height="6" rx="1.5" fill="#2f9d8f"/><path d="M.5 5q0 3.500 3.500 3.500T7.500 5M4 8.500V12"/></svg></button>
        <button aria-label="Language">ENG</button>
        <button class="group" aria-label="Network, sound and battery">
          <svg width="10" height="8" viewBox="0 0 10 8" fill="none" stroke="#e0e0e0"><path d="M.7 3Q5-1.200 9.300 3M2.300 4.800q2.700-2.500 5.400 0"/><circle cx="5" cy="6.7" r=".7"/></svg>
          <svg width="9" height="8" viewBox="0 0 9 8" fill="none" stroke="#e0e0e0"><path d="M.5 2.800H2L4.300.7v6.600L2 5.200H.5zM6 2.500q1 1.500 0 3M7.300 1q2 3 0 6"/></svg>
          <svg width="12" height="10" viewBox="0 0 12 10" fill="#e0e0e0"><path d="M1 0l2 2h8v6H9.500L8 10 6.500 8H1V4L0 2z"/><path d="M3 5.500l2-2M6.500 6l2-2" stroke="#444"/></svg>
        </button>
        <div class="end">
          <div class="time">4:10 PM<br>2/18/2026</div>
          <button aria-label="Notifications"><svg width="10" height="11" viewBox="0 0 10 11" fill="none" stroke="#dcdcdc"><path d="M5 1.500Q2 1.500 2 5v2L.5 8.500h9L8 7V6M3.500 9.500q1.500 1.500 3 0M5.500 2.500H9L5.500 5H9"/></svg></button>
        </div>
      </div>
    `;
  }
}

customElements.define('gold-logo', GoldLogo);
customElements.define('app-tab', AppTab);
customElements.define('tab-bar', TabBar);
customElements.define('chart-legend', ChartLegend);
customElements.define('signal-table', SignalTable);
customElements.define('price-chart', PriceChart);
customElements.define('price-axis', PriceAxis);
customElements.define('time-axis', TimeAxis);
customElements.define('range-bar', RangeBar);
customElements.define('task-bar', TaskBar);
customElements.define('trade-app', TradeApp);
</script>
</body>
</html>
